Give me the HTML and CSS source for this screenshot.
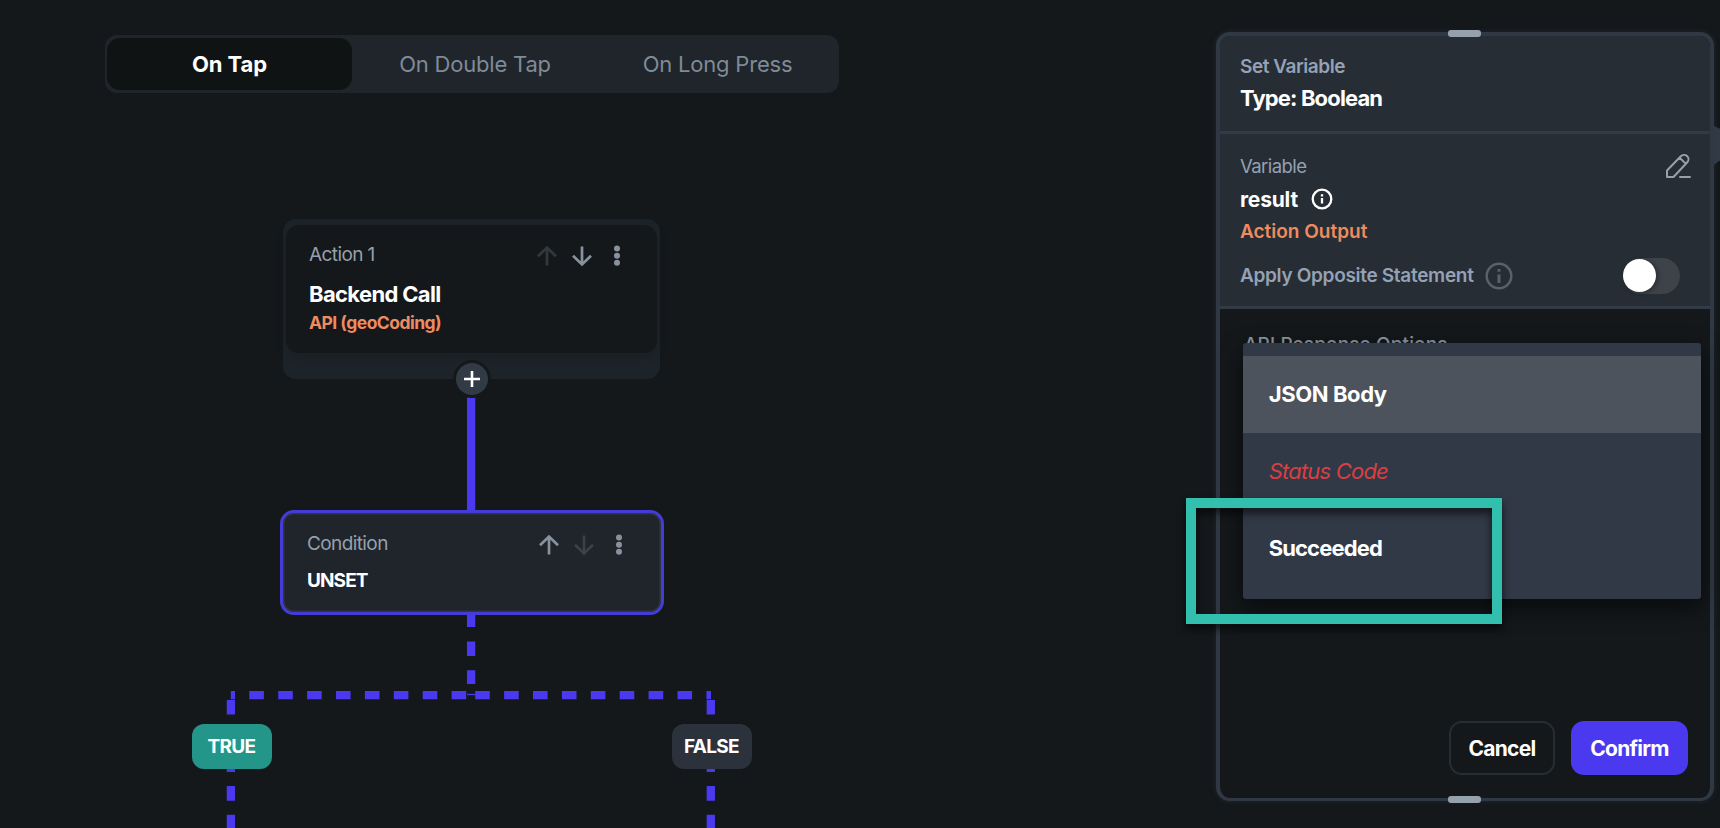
FILE: index.html
```html
<!DOCTYPE html>
<html lang="en">
<head>
<meta charset="utf-8">
<title>Action Flow Editor</title>
<link rel="stylesheet" href="styles.css">
</head>
<body>
<main class="editor">
  <nav class="tabs">
    <button class="tab tab-active">On Tap</button>
    <button class="tab">On Double Tap</button>
    <button class="tab">On Long Press</button>
  </nav>

  <svg class="wires" width="1200" height="828" viewBox="0 0 1200 828">
    <g fill="none" stroke="#4b39ef" stroke-width="8.3">
      <path d="M471.1 396V512"/>
      <path d="M471.1 612.5V684" stroke-dasharray="14.6 14.3"/>
      <path d="M467 695.2H230.8" stroke-dasharray="14.6 14.3" stroke-dashoffset="-.8"/>
      <path d="M475.2 695.2H711" stroke-dasharray="14.6 14.3"/>
      <path d="M467 694.5H475" stroke-width="1.3"/>
      <path d="M230.9 700V828" stroke-dasharray="14.6 14.1"/>
      <path d="M710.8 700V828" stroke-dasharray="14.6 14.1"/>
    </g>
  </svg>

  <section class="node action">
    <div class="action-card">
      <header class="node-head">
        <span class="label">Action 1</span>
        <svg width="90" height="24" viewBox="0 0 90 24" fill="none" stroke-width="2.7">
          <path stroke="#33383d" d="M11 21.5V4M2 12.3 11 3.6 20 12.3"/>
          <path stroke="#87929e" d="M46 2.5V20M37 11.7 46 20.4 55 11.7"/>
          <g fill="#87929e"><circle cx="81" cy="4.6" r="3"/><circle cx="81" cy="11.7" r="3"/><circle cx="81" cy="18.8" r="3"/></g>
        </svg>
      </header>
      <h2 class="action-title">Backend Call</h2>
      <p class="action-sub">API (geoCoding)</p>
    </div>
    <button class="add" aria-label="Add action">
      <svg width="16" height="16" viewBox="0 0 16 16" stroke="#fff" stroke-width="2.6"><path d="M8 0V16M0 8H16"/></svg>
    </button>
  </section>

  <section class="node condition">
    <header class="node-head">
      <span class="label">Condition</span>
      <svg width="90" height="24" viewBox="0 0 90 24" fill="none" stroke-width="2.7">
        <path stroke="#87929e" d="M11 21.5V4M2 12.3 11 3.6 20 12.3"/>
        <path stroke="#3a4149" d="M46 2.5V20M37 11.7 46 20.4 55 11.7"/>
        <g fill="#87929e"><circle cx="81" cy="4.6" r="3"/><circle cx="81" cy="11.7" r="3"/><circle cx="81" cy="18.8" r="3"/></g>
      </svg>
    </header>
    <h2 class="cond-title">UNSET</h2>
  </section>

  <div class="node branch branch-true">TRUE</div>
  <div class="node branch branch-false">FALSE</div>

  <svg class="nub" width="12" height="46" viewBox="0 0 12 46"><path d="M0 2C3 5 7 6 12 9V36C7 39 5 40 0 45Z" fill="#323a46"/></svg>

  <aside class="panel">
    <i class="grip grip-top"></i>
    <header class="panel-head">
      <p class="eyebrow">Set Variable</p>
      <h1 class="type">Type: Boolean</h1>
    </header>
    <section class="variable">
      <div class="row row-var">
        <span class="var-label">Variable</span>
        <svg width="26" height="26" viewBox="0 0 26 26" fill="none" stroke="#95a1ac" stroke-width="2" stroke-linejoin="round" stroke-linecap="round"><path d="M2 24V17.5L15.8 3.3A4.3 4.3 0 0 1 22.3 9.3L8.5 24ZM14.6 4.7 21 10.9M15 24H25"/></svg>
      </div>
      <div class="row row-name">
        <strong class="var-name">result</strong>
        <svg width="22" height="22" viewBox="0 0 22 22" fill="none" stroke="#fff" stroke-width="2.3"><circle cx="11" cy="11" r="9.3"/><path d="M11 10V15.5M11 6.2V8.4"/></svg>
      </div>
      <p class="var-source">Action Output</p>
      <div class="row row-toggle">
        <span class="toggle-label">Apply Opposite Statement</span>
        <svg width="28" height="28" viewBox="0 0 28 28" fill="none" stroke="#57636c" stroke-width="2.5"><circle cx="14" cy="14" r="12.3"/><path d="M14 12.5V21M14 7V9.7" stroke-width="3"/></svg>
        <span class="switch"><i class="knob"></i></span>
      </div>
    </section>
    <section class="options">
      <p class="options-label">API Response Options</p>
      <ul class="menu">
        <li class="item item-hover">JSON Body</li>
        <li class="item item-error">Status Code</li>
        <li class="item item-ok">Succeeded</li>
      </ul>
    </section>
    <footer class="actions">
      <button class="btn cancel">Cancel</button>
      <button class="btn confirm">Confirm</button>
    </footer>
    <i class="grip grip-bottom"></i>
  </aside>

  <div class="callout"></div>
</main>
</body>
</html>
```
FILE: styles.css
```css
* { box-sizing: border-box; }
body, h1, h2, p, ul { margin: 0; padding: 0; }
body { background: #14181b; font-family: Inter, "Liberation Sans", sans-serif; color: #fff; overflow: hidden; }
button { font: inherit; letter-spacing: inherit; color: inherit; border: 0; background: none; padding: 0; }
i, svg { display: block; }

.editor { position: relative; width: 1720px; height: 828px; overflow: hidden; padding: 34.5px 0 0 105px; }

.tabs { display: grid; grid-template-columns: 245px 246px 1fr; width: 734px; height: 58px; padding: 3px 2px; border-radius: 12px; background: #20242b; }
.tab { display: flex; align-items: center; justify-content: center; padding-top: 1px; border-radius: 13px; font-size: 22px; letter-spacing: -.2px; color: #7e8b98; }
.tab-active { background: #0f1313; color: #fff; font-weight: 700; letter-spacing: -.1px; }

.wires { position: absolute; left: 0; top: 0; }
.node { position: absolute; }
.node-head { display: flex; justify-content: space-between; align-items: flex-start; height: 24px; }
.label { color: #95a1ac; font-size: 19px; line-height: 22px; letter-spacing: -.6px; }

.action { left: 283px; top: 218.5px; width: 377px; height: 160px; border-radius: 13px; background: #1d2429; padding: 6.5px 3px 0; }
.action-card { height: 128px; border-radius: 13px; background: #14181b; box-shadow: 0 4px 10px #14181b66; padding: 19px 31px 0 23px; }
.action-title { font-size: 22px; line-height: 28px; margin-top: 12px; letter-spacing: -.65px; }
.action-sub { font-size: 17.5px; line-height: 24px; font-weight: 700; color: #ee8b60; margin-top: 3px; letter-spacing: -.54px; }
.add { position: absolute; left: 169.5px; top: 141px; width: 38px; height: 38px; border: 3px solid #14181b; border-radius: 50%; background: #323a46; display: grid; place-items: center; }

.condition { left: 280px; top: 510px; width: 384px; height: 105px; border: 3px solid #453bd8; border-radius: 14px; background: #20242b; box-shadow: inset 0 0 0 1.5px #2e363f; padding: 20px 33.5px 0 24px; }
.cond-title { font-size: 19px; line-height: 24px; margin-top: 12px; letter-spacing: -.9px; }

.branch { width: 80px; height: 45px; border-radius: 12px; display: grid; place-items: center; font-size: 19px; font-weight: 700; top: 724px; letter-spacing: -.7px; }
.branch-true { left: 191.5px; background: #249689; }
.branch-false { left: 671.5px; background: #2b323b; }

.nub { position: absolute; left: 1712px; top: 122px; }
.panel { position: absolute; left: 1216px; top: 32px; width: 498px; height: 769px; border: 4px solid #303943; border-bottom-width: 3px; border-radius: 14px; background: #14181b; box-shadow: 0 0 5px #32394888; display: flex; flex-direction: column; }
.grip { position: absolute; left: 227.5px; width: 33px; height: 7px; border-radius: 3px; background: #95a1ac; }
.grip-top { top: -6px; }
.grip-bottom { bottom: -5px; }
.panel-head { height: 98px; border-bottom: 3px solid #323a46; background: #262d34; border-radius: 10px 10px 0 0; padding: 19px 20px 0; }
.eyebrow { font-size: 19px; line-height: 24px; font-weight: 600; color: #95a1b4; letter-spacing: -.45px; }
.type { font-size: 22px; line-height: 28px; margin-top: 5px; letter-spacing: -.86px; }
.variable { height: 175px; background: #262d34; border-bottom: 3px solid #323a46; padding: 18px 19.5px 0 20px; }
.row { display: flex; align-items: center; }
.row-var { justify-content: space-between; height: 27px; }
.var-label { font-size: 18.5px; color: #95a1b4; letter-spacing: -.55px; }
.row-name { height: 28px; margin-top: 6px; gap: 13px; }
.var-name { font-size: 21px; letter-spacing: -.2px; }
.var-source { font-size: 19px; line-height: 24px; font-weight: 600; color: #ee8b60; margin-top: 7px; }
.row-toggle { height: 36px; margin-top: 13.5px; padding-right: 10.5px; }
.toggle-label { font-size: 19px; font-weight: 600; color: #95a1b4; margin-right: 11px; letter-spacing: -.31px; }
.switch { margin-left: auto; width: 57px; height: 36px; border-radius: 18px; background: #3e4249; padding: 1.5px 0; }
.knob { width: 33px; height: 33px; border-radius: 50%; background: #fff; box-shadow: 2px 1px 5px #0005; }
.options { padding: 24px 9px 0 23px; position: relative; flex: 1; }
.options-label { font-size: 19px; line-height: 24px; font-weight: 500; color: #8b97a2; padding-left: 1px; letter-spacing: .12px; }
.menu { list-style: none; position: absolute; left: 22.7px; top: 34px; width: 458px; height: 256px; padding-top: 13px; border-radius: 3px; background: #323946; box-shadow: 0 8px 22px #0009; }
.item { height: 76.7px; display: flex; align-items: center; padding-left: 26px; font-size: 22px; font-weight: 700; }
.item-hover { background: #4d535c; letter-spacing: -.4px; }
.item-error { color: #d93f42; font-style: italic; font-weight: 400; letter-spacing: -.8px; }
.item-ok { letter-spacing: -.87px; }
.actions { display: flex; justify-content: flex-end; gap: 16px; padding: 0 22px 23px 0; }
.btn { height: 54px; border-radius: 13px; font-size: 21px; font-weight: 700; letter-spacing: -.75px; }
.cancel { width: 106px; border: 2px solid #262d34; }
.confirm { width: 117px; background: #4b39ef; }

.callout { position: absolute; left: 1186px; top: 498px; width: 316px; height: 126px; border: 10px solid #32bfae; filter: drop-shadow(0 5px 4px #000a); }
```
